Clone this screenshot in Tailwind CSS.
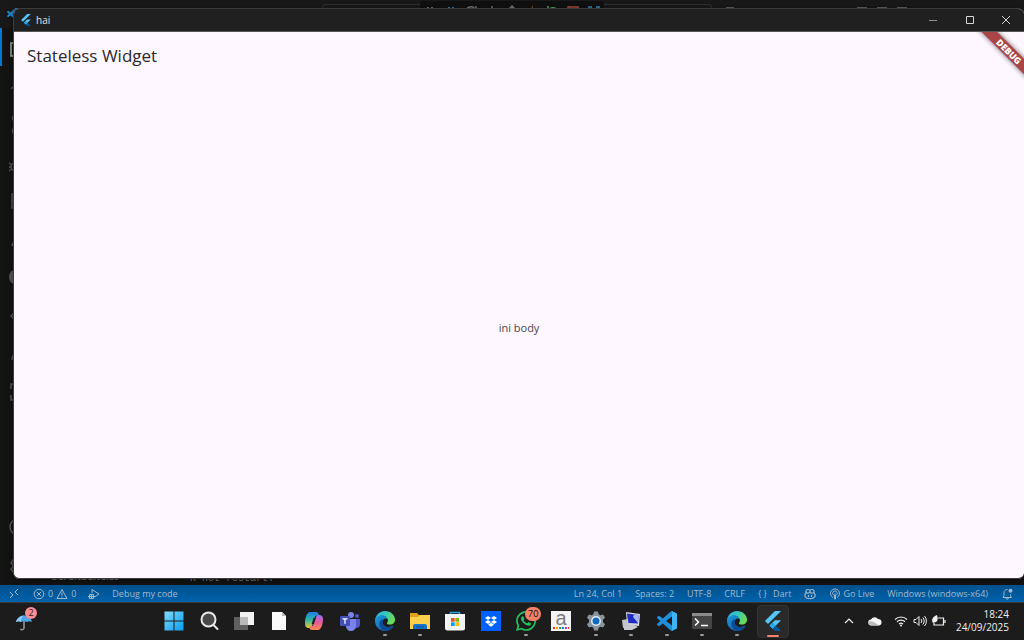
<!DOCTYPE html>
<html lang="en">
<head>
  <meta charset="UTF-8" />
  <meta name="viewport" content="width=device-width, initial-scale=1.0" />
  <title>hai</title>
  <script src="https://cdn.jsdelivr.net/npm/@tailwindcss/browser@4"></script>
</head>
<body class="flex h-screen flex-col overflow-hidden bg-[#141414] font-['Open_Sans','Noto_Sans',sans-serif] text-[10px] text-white">
  <!-- Shared icons -->
  <svg class="absolute h-0 w-0" xmlns="http://www.w3.org/2000/svg">
    <defs>
      <linearGradient id="edgeBlue" x1="0" y1="0" x2="1" y2="1">
        <stop offset="0" stop-color="#1b9de2" /><stop offset="1" stop-color="#0c4f9c" />
      </linearGradient>
      <linearGradient id="edgeGreen" x1="0" y1="0" x2="1" y2="0.4">
        <stop offset="0" stop-color="#2aa9e0" /><stop offset="0.5" stop-color="#33c6c4" /><stop offset="1" stop-color="#6bdc55" />
      </linearGradient>
      <linearGradient id="winBlue" x1="0" y1="0" x2="1" y2="1">
        <stop offset="0" stop-color="#7fdcfb" /><stop offset="1" stop-color="#0a9bf0" />
      </linearGradient>
      <linearGradient id="copilotA" x1="0" y1="0" x2="0" y2="1">
        <stop offset="0" stop-color="#1a7fe8" /><stop offset="0.5" stop-color="#2fb8a0" /><stop offset="1" stop-color="#f2c534" />
      </linearGradient>
      <linearGradient id="copilotB" x1="0" y1="0" x2="0" y2="1">
        <stop offset="0" stop-color="#9a6cf0" /><stop offset="0.5" stop-color="#ea5a9b" /><stop offset="1" stop-color="#f58a4e" />
      </linearGradient>
    </defs>
    <symbol id="flutter" viewBox="0 0 24 24">
      <path fill="#54c5f8" d="M14.3 0 2.3 12 6 15.7 21.7 0z" />
      <path fill="#54c5f8" d="M14.3 11.1 7.9 17.5l3.7 3.7L21.7 11.1z" />
      <path fill="#01579b" d="m11.6 21.2 3.6-3.7 6.5 6.5h-7.4z" />
      <path fill="#29a4e8" d="m7.9 17.5 3.7-3.6 3.6 3.6-3.6 3.7z" />
    </symbol>
    <symbol id="vscode" viewBox="0 0 24 24">
      <path fill="#1f8fdc" d="M23.15 2.587 18.21.21a1.494 1.494 0 0 0-1.705.29l-9.46 8.63-4.12-3.128a1 1 0 0 0-1.276.057L.327 7.261A1 1 0 0 0 .326 8.74L3.899 12 .326 15.26a1 1 0 0 0 .001 1.479L1.65 17.94a1 1 0 0 0 1.276.057l4.12-3.128 9.46 8.63a1.492 1.492 0 0 0 1.704.29l4.942-2.377A1.5 1.5 0 0 0 24 20.06V3.939a1.5 1.5 0 0 0-.85-1.352zm-5.146 14.861L10.826 12l7.178-5.448v10.896z" />
      <path fill="#3fb4f5" d="M18 .2v23.6l.2 0 4.95-2.37A1.5 1.5 0 0 0 24 20.06V3.94a1.5 1.5 0 0 0-.85-1.35z" />
    </symbol>
    <symbol id="edge" viewBox="0 0 24 24">
      <path fill="url(#edgeBlue)" d="M0 12c0-4 4-7 8.500-7 4.500 0 7 3 7 5-2-2-6.500-.5-6.500 3.500 0 4 4.500 6.500 8.500 5.500 1.500-.4 3-1.300 4-1.200.6.200.4.800 0 1.300A12 12 0 0 1 12 24C5.500 24 0 18.600 0 12z" />
      <path fill="#0b4a94" d="M9.500 9.500C5 11 4 17 7.500 21c1.500 1.700 3.500 2.700 6 2.900 3.500-.4 6.500-2 8.300-4.700.2-.700-.3-.9-.8-.6-2 1-4.500 1.300-6.500.6-4.500-1.500-6.500-6-5-9.700z" />
      <path fill="url(#edgeGreen)" d="M0 12C.3 5 5.500 0 12 0c7 0 12 5 12 10.500 0 3.500-2.500 5.700-5.800 5.700-2.600 0-4-.9-4-1.600 0-.8 1.300-1.100 1.300-3.300 0-3-3-5.800-7-5.800C4.500 5.500.8 8 0 12z" />
    </symbol>
  </svg>

  <main class="relative flex min-h-0 flex-1 flex-col overflow-hidden">
    <!-- Editor behind the app window -->
    <header class="flex h-7 shrink-0 items-start bg-[#191919]">
      <svg class="mt-2 ml-[7px] h-3 w-3"><use href="#vscode" /></svg>
      <div class="mt-1 ml-[303px] h-5 w-[98px] rounded-tl border-t border-l border-[#303030]"></div>
      <div class="mt-px flex h-5 w-[184px] items-center justify-around rounded bg-[#101010]">
        <svg class="h-4 w-3" viewBox="0 0 12 16" fill="#6f6f6f"><path d="M3 4h2v2H3zM7 4h2v2H7zM3 8h2v2H3zM7 8h2v2H7z" /></svg>
        <svg class="h-4 w-3" viewBox="0 0 12 16" fill="#3b82b8"><path d="M3 4h2v10H3zM7 4h2v10H7z" /></svg>
        <svg class="h-4 w-3" viewBox="0 0 12 16" fill="none" stroke="#777" stroke-width="1.500"><path d="M1 8a5 5 0 0 1 9-2M11 3v4H7" /></svg>
        <svg class="h-4 w-3" viewBox="0 0 12 16" fill="none" stroke="#777" stroke-width="1.500"><path d="M6 3v9M3 9l3 3 3-3" /></svg>
        <svg class="h-4 w-3" viewBox="0 0 12 16" fill="none" stroke="#777" stroke-width="1.500"><path d="M6 12V3M2 7l4-4 4 4" /></svg>
        <svg class="h-4 w-3" viewBox="0 0 12 16" fill="#c27a2c"><path d="M7 2 3 10h3l-1 5 4-8H6z" /></svg>
        <svg class="h-4 w-3" viewBox="0 0 12 16" fill="none" stroke="#5fae62" stroke-width="1.500"><path d="M2 7a5 5 0 0 1 9 2M1 3v4h4" /></svg>
        <svg class="h-4 w-3" viewBox="0 0 12 16" fill="none" stroke="#b3503f" stroke-width="1.500"><path d="M1 4h10v9H1z" /></svg>
        <svg class="h-4 w-3" viewBox="0 0 12 16" fill="none" stroke="#3b8fc0" stroke-width="1.500"><path d="M1 7V4h3M8 4h3v3M5 6h2" /></svg>
      </div>
      <div class="mt-1 h-5 w-[108px] rounded-tr border-t border-r border-[#303030]"></div>
      <div class="mt-[7px] ml-3.5 h-2.5 w-2 border border-[#606060]"></div>
      <div class="mt-[7px] mr-[117px] ml-auto flex gap-2.5">
        <div class="h-2.5 w-2.5 border border-[#606060]"></div>
        <div class="h-2.5 w-2.5 border border-[#606060]"></div>
        <div class="h-2.5 w-2.5 border border-[#606060]"></div>
      </div>
    </header>
    <div class="flex min-h-0 flex-1">
      <nav class="flex w-9 flex-col justify-between text-[#5c5c5c]">
        <div class="flex flex-col">
          <div class="flex h-[38px] items-center justify-center border-l-2 border-[#0078d4] pt-1 text-[#b5b5b5]">
            <svg class="h-5 w-5" viewBox="0 0 20 20" fill="none" stroke="currentColor" stroke-width="1.500"><path d="M2 4h12v13H2zM6 4V2h12v12h-4" /></svg>
          </div>
          <div class="flex h-[38px] items-center justify-center pt-1">
            <svg class="h-5 w-5" viewBox="0 0 20 20" fill="none" stroke="currentColor" stroke-width="1.500"><path d="M3 12l9-9" /></svg>
          </div>
          <div class="flex h-[38px] items-center justify-center pt-1">
            <svg class="h-5 w-5" viewBox="0 0 20 20" fill="none" stroke="currentColor" stroke-width="1.500"><circle cx="7" cy="3" r="2.500" /><circle cx="7" cy="16" r="2.500" /><circle cx="15" cy="7" r="2.500" /></svg>
          </div>
          <div class="flex h-[38px] items-center justify-center pt-1">
            <svg class="h-5 w-5" viewBox="0 0 20 20" fill="none" stroke="currentColor" stroke-width="1.500"><circle cx="7" cy="14" r="4" /><path d="M1 10l3 2M1 14h2M1 18l3-2M8 2l10 7-8 6" /></svg>
          </div>
          <div class="flex h-[38px] items-center justify-center pt-1">
            <svg class="h-5 w-5" viewBox="0 0 20 20" fill="none" stroke="currentColor" stroke-width="1.500"><path d="M4 3h7v14H4zM4 10h14v7H4zM13 2h6v6h-6z" /></svg>
          </div>
          <div class="flex h-[38px] items-center justify-center pt-1">
            <svg class="h-5 w-5" viewBox="0 0 20 20" fill="none" stroke="currentColor" stroke-width="1.500"><path d="M8 2h5M9 2v5L4 16h13L12 7V2" /></svg>
          </div>
          <div class="flex h-[38px] items-center justify-center pt-1">
            <svg class="h-5 w-5" viewBox="0 0 20 20" fill="currentColor"><circle cx="9" cy="10" r="8" /></svg>
          </div>
          <div class="flex h-[38px] items-center justify-center pt-1">
            <svg class="h-5 w-5" viewBox="0 0 20 20" fill="none" stroke="currentColor" stroke-width="1.500"><path d="M7 7l-4 4 4 4M12 7l4 4-4 4" /></svg>
          </div>
          <div class="flex h-[38px] items-center justify-center pt-1">
            <svg class="h-5 w-5" viewBox="0 0 20 20" fill="none" stroke="currentColor" stroke-width="1.500"><path d="M4 16a6 6 0 0 1 12 0z" /></svg>
          </div>
          <div class="flex h-[38px] items-center justify-center pt-1">
            <svg class="h-5 w-5" viewBox="0 0 20 20" fill="none" stroke="currentColor" stroke-width="1.500"><path d="M6 3H3v5M14 3h3v5M3 14v5h3M17 14v5h-3" /></svg>
          </div>
        </div>
        <div class="flex flex-col">
          <div class="flex h-[38px] items-center justify-center">
            <svg class="h-5 w-5" viewBox="0 0 20 20" fill="none" stroke="currentColor" stroke-width="1.500"><circle cx="10" cy="9" r="8" /></svg>
          </div>
          <div class="flex h-[38px] items-center justify-center">
            <svg class="h-5 w-5" viewBox="0 0 20 20" fill="none" stroke="currentColor" stroke-width="1.500"><path d="M8 2h4v3l3-1 2 3-2 2v2l2 2-2 3-3-1v3H8v-3l-3 1-2-3 2-2V9L3 7l2-3 3 1z" /></svg>
          </div>
        </div>
      </nav>
      <div class="flex w-[154px] items-end pb-0.5 text-[9px] leading-3 font-bold text-[#777]">
        <span class="pl-2">&gt; DEPENDENCIES</span>
      </div>
      <div class="flex flex-1 items-end font-['Liberation_Mono',monospace] text-[10px] leading-3 text-[#8a8a8a]">
        <span>R Hot restart.</span>
      </div>
    </div>

    <!-- App window -->
    <section class="absolute top-2 right-0 bottom-1.5 left-[13px] flex flex-col overflow-hidden rounded-md border border-r-0 border-[#3c3c3c] bg-[#fef7ff] shadow-[0_2px_8px_rgba(0,0,0,0.5)]">
      <header class="flex h-[23px] shrink-0 items-center border-b border-[#555] bg-[#202020] pl-1.5">
        <svg class="h-3 w-3"><use href="#flutter" /></svg>
        <h1 class="ml-1 text-[10px] text-[#e4e4e4]">hai</h1>
        <div class="ml-auto flex h-full text-[#d6d6d6]">
          <button class="flex w-[37px] items-center justify-center" aria-label="Minimize">
            <svg class="h-2.5 w-2.5" viewBox="0 0 10 10" stroke="#8f8f8f"><path d="M1 5.500h8" /></svg>
          </button>
          <button class="flex w-[37px] items-center justify-center" aria-label="Maximize">
            <svg class="h-2.5 w-2.5" viewBox="0 0 10 10" fill="none" stroke="currentColor"><path d="M1.500 1.500h7v7h-7z" /></svg>
          </button>
          <button class="flex w-9 items-center justify-center" aria-label="Close">
            <svg class="h-2.5 w-2.5" viewBox="0 0 10 10" stroke="currentColor"><path d="M1 1l8 8M9 1L1 9" /></svg>
          </button>
        </div>
      </header>
      <div class="relative flex min-h-0 flex-1 flex-col">
        <div class="flex h-12 shrink-0 items-center px-[13px]">
          <h2 class="text-[17px] text-[#2a282d]">Stateless Widget</h2>
        </div>
        <div class="flex flex-1 items-center justify-center pb-0.5 text-[11px] text-[#49454f]">
          <p>ini body</p>
        </div>
        <div class="absolute top-0 right-0 h-14 w-14 overflow-hidden">
          <div class="absolute top-3.5 -left-[7px] flex h-[11px] w-24 rotate-45 items-center justify-center bg-[#ab4546] text-[9px] font-black text-white shadow-[0_0_5px_rgba(0,0,0,0.6)]">DEBUG</div>
        </div>
      </div>
    </section>
  </main>

  <!-- Editor status bar -->
  <footer class="flex h-[17px] shrink-0 items-center justify-between bg-linear-to-b from-[#00508c] to-[#0062ab] pr-[11px] pl-2 text-[9px] text-[#a3b8cb]">
    <div class="flex items-center">
      <svg class="h-3 w-3" viewBox="0 0 12 12" fill="none" stroke="currentColor"><path d="M2 4l3 3-3 3M10 1L7 4l3 3" /></svg>
      <div class="ml-[13px] flex items-center gap-[3px]">
        <svg class="h-3 w-3" viewBox="0 0 12 12" fill="none" stroke="currentColor"><circle cx="6" cy="6" r="4.800" /><path d="M4 4l4 4M8 4L4 8" /></svg>
        <span>0</span>
        <svg class="h-3 w-3" viewBox="0 0 12 12" fill="none" stroke="currentColor"><path d="M6 1.500L11 10.500H1zM6 4.500v3M6 8.500v1" /></svg>
        <span>0</span>
      </div>
      <svg class="ml-3 h-3 w-3" viewBox="0 0 12 12" fill="none" stroke="currentColor"><path d="M4 5V1.500L11 6 6.500 9M1.500 6.500h4v4h-4zM0 8.500h7M3.500 6.500v4" /></svg>
      <span class="ml-3">Debug my code</span>
    </div>
    <div class="flex items-center gap-[13px]">
      <span>Ln 24, Col 1</span>
      <span>Spaces: 2</span>
      <span>UTF-8</span>
      <span>CRLF</span>
      <span class="flex gap-1.5"><span>{ }</span><span>Dart</span></span>
      <svg class="h-3 w-3" viewBox="0 0 12 12" fill="none" stroke="currentColor" stroke-width="1.200"><path d="M2 5V3c0-2 4-2 4 0v1c0 1.500-4 1.500-4 0M10 5V3c0-2-4-2-4 0v1c0 1.500 4 1.500 4 0M2 5L1 6.500v2C3 11.500 9 11.500 11 8.500v-2L10 5M4.500 7v2M7.500 7v2" /></svg>
      <span class="flex items-center gap-0.5">
        <svg class="h-3 w-3" viewBox="0 0 12 12" fill="none" stroke="currentColor"><path d="M4 9.500a4.500 4.500 0 1 1 4 0M4.500 7a2.300 2.300 0 1 1 3 0M6 5.500v6M5.500 7v4M6.500 7v4" /></svg>
        <span>Go Live</span>
      </span>
      <span>Windows (windows-x64)</span>
      <svg class="h-3 w-3" viewBox="0 0 12 12" fill="none" stroke="currentColor"><path d="M6.500 1.500C4 1.500 3 3 3 5v2.500L2 9.500h8.500L9.500 7.500V6.500M5 10a1.200 1.200 0 0 0 2.400 0" /><circle cx="9.500" cy="2.800" r="2" fill="currentColor" stroke="none" /></svg>
    </div>
  </footer>

  <!-- Taskbar -->
  <nav class="flex h-[38px] shrink-0 border-t border-[#3b3b3b] bg-[#1c1c1c]">
    <div class="w-[156px] pl-4">
      <button class="relative mt-2 h-5 w-6" aria-label="Weather">
        <svg class="h-5 w-4" viewBox="0 0 16 20"><path fill="#4ba3ea" d="M0 11C1 7 4 4.500 8 4.500S15 7 16 11c-2-1-3.500-1-5 0-2-1-4-1-6 0-1.500-1-3-1-5 0z" /><path fill="#8ec9f6" d="M5 11c0-3 1.500-6 3-6.500-4 .5-7 3-8 6.500 2-1 3.500-1 5 0z" /><path d="M8 10v7a2 2 0 0 1-3.500 1" fill="none" stroke="#9a9a9a" stroke-width="1.500" /></svg>
        <span class="absolute -top-1 left-[9px] flex h-3 w-3 items-center justify-center rounded-full bg-[#fb8e95] text-[9px] leading-3 text-[#331a1c]">2</span>
      </button>
    </div>
    <div class="grid w-[634px] grid-cols-18">
      <button class="flex items-center justify-center pb-px" aria-label="Start">
        <svg class="h-5 w-5" viewBox="0 0 20 20" fill="url(#winBlue)"><path d="M.5.5h9v9h-9zM10.500.5h9v9h-9zM.5 10.500h9v9h-9zM10.500 10.500h9v9h-9z" /></svg>
      </button>
      <button class="flex items-center justify-center pb-px" aria-label="Search">
        <svg class="h-5 w-5" viewBox="0 0 20 20" fill="#4a4a4a" stroke="#e8e8e8" stroke-width="2"><circle cx="9.500" cy="8.500" r="7" /><path d="M14.500 14l4 4" stroke-linecap="round" /></svg>
      </button>
      <button class="flex items-center justify-center pb-px" aria-label="Task view">
        <svg class="h-5 w-5" viewBox="0 0 20 20"><path fill="#f2f2f2" d="M6 1h14v13H6z" /><path fill="#5f5f5f" d="M0 6h14v13H0z" /><path fill="#b9b9b9" d="M6 6h8v8H6z" /></svg>
      </button>
      <button class="flex items-center justify-center pb-px" aria-label="Document">
        <svg class="h-5 w-5" viewBox="0 0 20 20"><path fill="#fafafa" d="M3 1h10l4 4v14H3z" /><path fill="#bdbdbd" d="M13 1v4h4z" /></svg>
      </button>
      <button class="flex items-center justify-center pb-px" aria-label="Copilot">
        <svg class="h-5 w-5" viewBox="0 0 20 20"><path fill="url(#copilotA)" d="M6 1h6c2 0 2.500 1.500 3 3.500h-2c-1.500 0-2 .8-2.500 2.500L8 15c-.5 1.500-1.500 2-3 2-3 0-4-2-4-5 0-4 1.500-11 5-11z" /><path fill="url(#copilotB)" d="M14 19H8c-2 0-2.500-1.500-3-3.500h2c1.500 0 2-.8 2.500-2.500L12 6c.5-1.500 1.500-2 3-2 3 0 4 2 4 4 0 4-1.500 11-5 11z" /><path fill="#1c1c1c" d="M9.500 7h2.300l-1.900 6H7.700z" /></svg>
      </button>
      <button class="flex items-center justify-center pb-px" aria-label="Teams">
        <svg class="h-5 w-5" viewBox="0 0 20 20"><circle cx="11" cy="4" r="3" fill="#7b83eb" /><circle cx="17" cy="5" r="2" fill="#5059c9" /><path fill="#5059c9" d="M13 8h7v5c0 3-2 4-4 4z" /><path fill="#7b83eb" d="M6 8h10v6a5 5 0 0 1-10 2z" /><rect y="5" width="10" height="10" rx="1" fill="#4450b5" /><path stroke="#fff" stroke-width="1.300" d="M2.500 7.800h5M5 7.800v5" /></svg>
      </button>
      <button class="relative flex items-center justify-center pb-px" aria-label="Edge">
        <svg class="h-5 w-5"><use href="#edge" /></svg>
        <span class="absolute bottom-1 h-0.5 w-1 rounded-full bg-[#9a9a9a]"></span>
      </button>
      <button class="relative flex items-center justify-center pb-px" aria-label="File Explorer">
        <svg class="h-5 w-5" viewBox="0 0 20 20"><path fill="#e0a21b" d="M0 2h7l2 2h11v5H0z" /><path fill="#fccf4d" d="M0 6h8l2-2h10v14H0z" /><path fill="#1673c8" d="M3 18v-3a2 2 0 0 1 2-2h10a2 2 0 0 1 2 2v3z" /><path fill="#0d4f93" d="M6 15.500h8v1H6z" /></svg>
        <span class="absolute bottom-1 h-0.5 w-1 rounded-full bg-[#9a9a9a]"></span>
      </button>
      <button class="flex items-center justify-center pb-px" aria-label="Microsoft Store">
        <svg class="h-5 w-5" viewBox="0 0 20 20"><path fill="none" stroke="#2d9fd9" stroke-width="1.500" d="M5.500 5V1.500h9V5" /><path fill="#f3f3f3" d="M0 3h20v14a2.500 2.500 0 0 1-2.500 2.500h-15A2.500 2.500 0 0 1 0 17z" /><path fill="#f25022" d="M6 7h3.700v3.700H6z" /><path fill="#7fba00" d="M10.300 7H14v3.700h-3.700z" /><path fill="#00a4ef" d="M6 11.300h3.700V15H6z" /><path fill="#ffb900" d="M10.300 11.300H14V15h-3.700z" /></svg>
      </button>
      <button class="flex items-center justify-center pb-px" aria-label="Dropbox">
        <svg class="h-5 w-5" viewBox="0 0 20 20"><path fill="#0061fe" d="M0 0h20v20H0z" /><path fill="#fff" d="M7 5l3 2-3 2-3-2zM13 5l3 2-3 2-3-2zM7 9l3 2-3 2-3-2zM13 9l3 2-3 2-3-2zM10 11.800l3 2-3 2-3-2z" /></svg>
      </button>
      <button class="relative flex items-center justify-center pb-px" aria-label="WhatsApp">
        <svg class="h-5 w-5" viewBox="0 0 24 24"><path fill="#25c35f" d="M17.472 14.382c-.297-.149-1.758-.867-2.030-.967-.273-.099-.471-.148-.670.150-.197.297-.767.966-.940 1.164-.173.199-.347.223-.644.075-.297-.150-1.255-.463-2.390-1.475-.883-.788-1.480-1.761-1.653-2.059-.173-.297-.018-.458.130-.606.134-.133.298-.347.446-.520.149-.174.198-.298.298-.497.099-.198.050-.371-.025-.520-.075-.149-.669-1.612-.916-2.207-.242-.579-.487-.5-.669-.510-.173-.008-.371-.010-.570-.010-.198 0-.520.074-.792.372-.272.297-1.040 1.016-1.040 2.479 0 1.462 1.065 2.875 1.213 3.074.149.198 2.096 3.200 5.077 4.487.709.306 1.262.489 1.694.625.712.227 1.360.195 1.871.118.571-.085 1.758-.719 2.006-1.413.248-.694.248-1.289.173-1.413-.074-.124-.272-.198-.570-.347m-5.421 7.403h-.004a9.870 9.870 0 0 1-5.031-1.378l-.361-.214-3.741.982.998-3.648-.235-.374a9.860 9.860 0 0 1-1.510-5.260c.001-5.450 4.436-9.884 9.888-9.884 2.640 0 5.122 1.030 6.988 2.898a9.825 9.825 0 0 1 2.893 6.994c-.003 5.450-4.437 9.884-9.885 9.884m8.413-18.297A11.815 11.815 0 0 0 12.050 0C5.495 0 .160 5.335.157 11.892c0 2.096.547 4.142 1.588 5.945L.057 24l6.305-1.654a11.882 11.882 0 0 0 5.683 1.448h.005c6.554 0 11.890-5.335 11.893-11.893a11.821 11.821 0 0 0-3.480-8.413Z" /></svg>
        <span class="absolute top-1 right-0.5 flex h-3.5 w-4 items-center justify-center rounded-full bg-[#f4826a] font-['Inter',sans-serif] text-[9px] leading-3 text-[#2b1512]">70</span>
        <span class="absolute bottom-1 h-0.5 w-1 rounded-full bg-[#9a9a9a]"></span>
      </button>
      <button class="flex items-center justify-center pb-px" aria-label="Typing app">
        <span class="flex h-5 w-5 flex-col items-center justify-between bg-[#f4f4f4] pb-0.5 text-[#7c7c7c]">
          <span class="font-['Liberation_Sans',sans-serif] text-[20px] leading-[14px]">a</span>
          <svg class="h-0.5 w-4" viewBox="0 0 16 2"><path fill="#e33" d="M0 0h2v2H0z" /><path fill="#f5a300" d="M3 0h2v2H3z" /><path fill="#3a3" d="M6 0h2v2H6z" /><path fill="#27c" d="M9 0h2v2H9z" /><path fill="#a3c" d="M12 0h2v2h-2z" /><path fill="#e33" d="M15 0h1v2h-1z" /></svg>
        </span>
      </button>
      <button class="relative flex items-center justify-center pb-px" aria-label="Settings">
        <svg class="h-5 w-5" viewBox="0 0 20 20"><path fill="#8b949c" d="M8 .5h4l.6 2.800 1.800 1 2.700-.9 2 3.400-2.100 2v2.400l2.100 2-2 3.400-2.700-.9-1.800 1-.6 2.800H8l-.6-2.800-1.800-1-2.700.9-2-3.400 2.100-2V8.800l-2.100-2 2-3.400 2.700.9 1.800-1z" /><circle cx="10" cy="10" r="5" fill="#e6edf3" /><circle cx="10" cy="10" r="3.500" fill="#0f6cbd" /></svg>
        <span class="absolute bottom-1 h-0.5 w-1 rounded-full bg-[#9a9a9a]"></span>
      </button>
      <button class="relative flex items-center justify-center pb-px" aria-label="Remote computer">
        <svg class="h-5 w-5" viewBox="0 0 20 20"><path fill="#d7d7df" d="M5 1l14 2-1 12-12-1z" /><path fill="#1c2bc4" d="M6 2.500L17.500 4 17 12.500 7 12z" /><path fill="#a9b6f5" d="M13 3.500l4.500.5-.5 8-5-6z" /><path fill="#c4c4cb" d="M1 9l6-1 1 8-6 1z" /><path fill="#c9c9d2" d="M3 16l8-3 6 3-6 3-8 0z" /></svg>
        <span class="absolute bottom-1 h-0.5 w-1 rounded-full bg-[#9a9a9a]"></span>
      </button>
      <button class="relative flex items-center justify-center pb-px" aria-label="Visual Studio Code">
        <svg class="h-5 w-5"><use href="#vscode" /></svg>
        <span class="absolute bottom-1 h-0.5 w-1 rounded-full bg-[#9a9a9a]"></span>
      </button>
      <button class="relative flex items-center justify-center pb-px" aria-label="Terminal">
        <svg class="h-5 w-5" viewBox="0 0 20 20"><rect y="2" width="20" height="16" rx="1" fill="#454545" /><path fill="#8a8a8a" d="M0 2h20v3H0z" /><path fill="none" stroke="#fff" stroke-width="1.500" d="M3 7.500L6.500 11 3 14.500M9 14.500h7" /></svg>
        <span class="absolute bottom-1 h-0.5 w-1 rounded-full bg-[#9a9a9a]"></span>
      </button>
      <button class="relative flex items-center justify-center pb-px" aria-label="Edge window">
        <svg class="h-5 w-5"><use href="#edge" /></svg>
        <span class="absolute bottom-1 h-0.5 w-1 rounded-full bg-[#9a9a9a]"></span>
      </button>
      <button class="relative my-0.5 mr-px ml-0.5 flex items-center justify-center rounded border border-[#333] bg-[#2a2a2a] pb-px" aria-label="hai">
        <svg class="h-5 w-5"><use href="#flutter" /></svg>
        <span class="absolute bottom-0 h-0.5 w-3 rounded-full bg-[#f4826a]"></span>
      </button>
    </div>
    <div class="ml-auto flex items-center pr-[15px] pb-0.5 text-[#f0f0f0]">
      <svg class="h-2.5 w-2.5" viewBox="0 0 10 10" fill="none" stroke="currentColor" stroke-width="1.200"><path d="M1 7l4-4 4 4" /></svg>
      <svg class="ml-3.5 h-3.5 w-3.5" viewBox="0 0 14 14"><path fill="#f5f5f5" d="M3.500 11.500a3 3 0 0 1-.5-6 4 4 0 0 1 7-.5 3.300 3.300 0 0 1 1 6.500z" /><path fill="#bcbcbc" d="M3.500 11.500C1 11.500 0 8.500 2 7l4 1 5 3.500z" /></svg>
      <svg class="ml-3 h-3.5 w-3.5" viewBox="0 0 14 14" fill="none" stroke="currentColor" stroke-width="1.200"><path d="M1 5.500a8.500 8.500 0 0 1 12 0M3 7.800a5.700 5.700 0 0 1 8 0M5 10a3 3 0 0 1 4 0" /><circle cx="7" cy="11.500" r="1" fill="currentColor" stroke="none" /></svg>
      <svg class="ml-[5px] h-3.5 w-3.5" viewBox="0 0 14 14" fill="none" stroke="currentColor"><path d="M1 5.500h2l3-3v9l-3-3H1zM8 5a3 3 0 0 1 0 4M9.800 3.500a5 5 0 0 1 0 7M11.500 2a7.500 7.500 0 0 1 0 10" /></svg>
      <svg class="ml-[5px] h-3.5 w-3.5" viewBox="0 0 14 14" fill="none" stroke="currentColor" stroke-width="1.200"><path d="M6 4h5.500v7H2V9M13 6v3" /><path fill="currentColor" stroke="none" d="M0 7c0-3 2-5 5-6 1 3 1 6-1 7-1 .6-2.500.4-3 1z" /></svg>
      <time class="ml-2.5 flex flex-col text-right leading-[13px]"><span>18:24</span><span>24/09/2025</span></time>
    </div>
  </nav>
</body>
</html>
